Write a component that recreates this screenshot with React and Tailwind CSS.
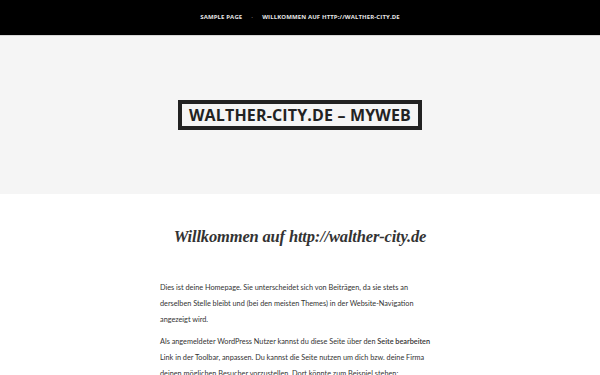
export default function App() {
  return (
    <div className="min-h-[375px] bg-white font-['Open_Sans',sans-serif]">
      {/* Navigation */}
      <header className="h-[36px] bg-black border-b border-[#d6d6d6] flex items-center justify-center gap-[9px] text-[6px] font-bold uppercase tracking-[0.02em] text-[#e6e6e6]">
        <a href="#">Sample Page</a>
        <span className="text-[#777]">·</span>
        <a href="#">Willkommen auf http://walther-city.de</a>
      </header>

      {/* Site title */}
      <section className="h-[158px] bg-[#f5f5f5] flex items-center justify-center">
        <div className="border-[4px] border-[#222] px-[7px] py-0">
          <h1 className="text-[16px] font-bold uppercase leading-[22px] text-[#222] tracking-[0.01em]">
            Walther-city.de – myweb
          </h1>
        </div>
      </section>

      {/* Content */}
      <main className="w-[280px] mx-auto pt-[33px]">
        <h2 className="text-center whitespace-nowrap font-['Liberation_Serif',serif] italic font-bold text-[16.5px] leading-[20px] text-[#333] tracking-[-0.01em] -mx-[40px]">
          Willkommen auf http://walther-city.de
        </h2>
        <div className="mt-[33px] -mr-[40px] font-['Lato',sans-serif] text-[7.3px] leading-[16px] text-[#333]">
          <p>
            Dies ist deine Homepage. Sie unterscheidet sich von Beiträgen, da sie stets an<br />
            derselben Stelle bleibt und (bei den meisten Themes) in der Website-Navigation<br />
            angezeigt wird.
          </p>
          <p className="mt-[6px]">
            Als angemeldeter WordPress Nutzer kannst du diese Seite über den <strong className="font-semibold">Seite bearbeiten</strong><br />
            Link in der Toolbar, anpassen. Du kannst die Seite nutzen um dich bzw. deine Firma<br />
            deinen möglichen Besucher vorzustellen. Dort könnte zum Beispiel stehen:
          </p>
        </div>
      </main>
    </div>
  );
}
